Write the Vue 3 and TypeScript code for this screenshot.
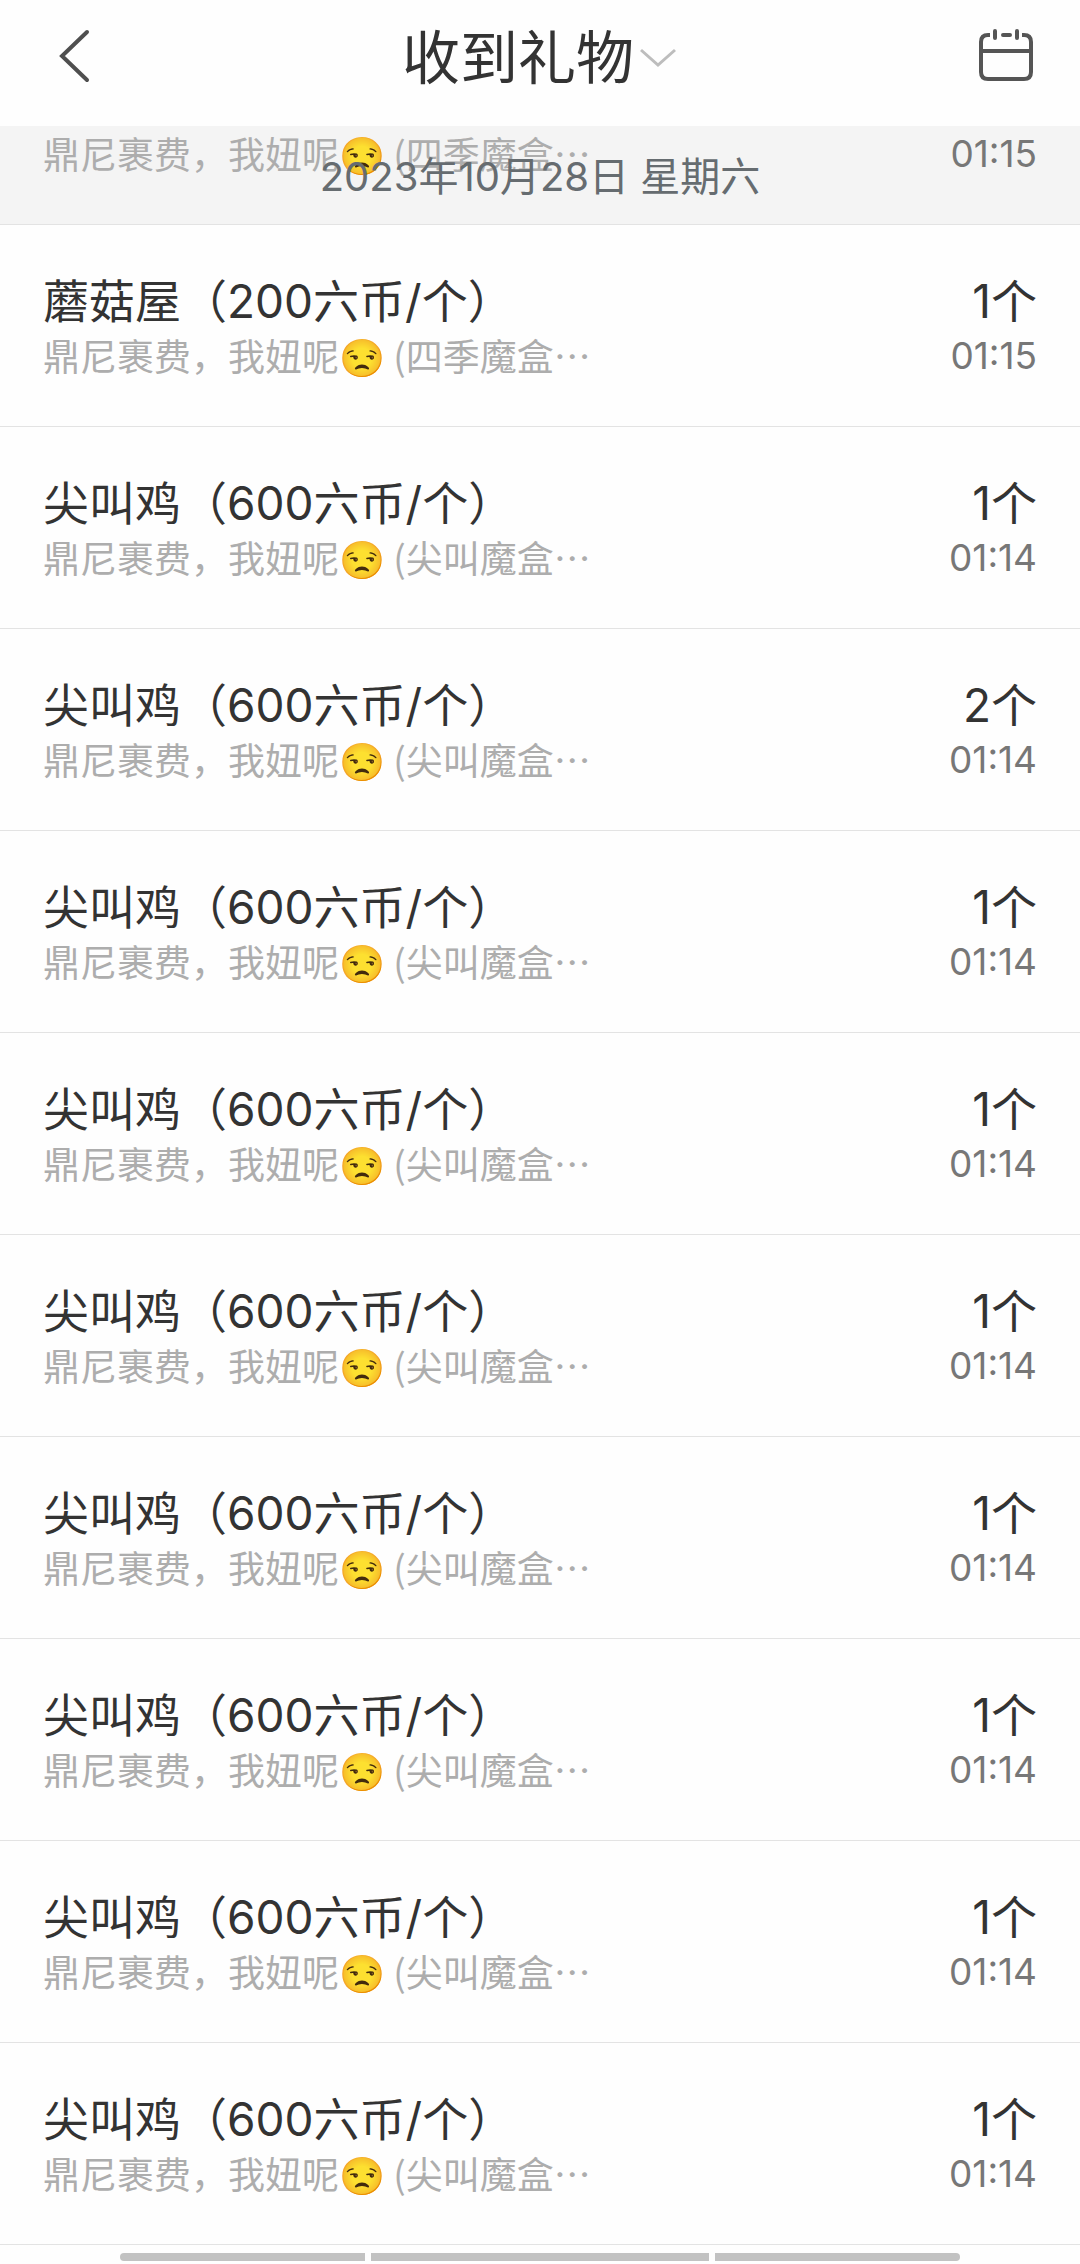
<script setup lang="ts">
interface Gift {
  id: number
  name: string
  price: number
  count: number
  box: string
  time: string
}

const sender = '鼎尼裹费，我妞呢😒'

const previous = { box: '四季魔盒', time: '01:15' }

const counts: number[] = [1, 2, 1, 1, 1, 1, 1, 1, 1]

const gifts: Gift[] = [
  { id: 0, name: '蘑菇屋', price: 200, count: 1, box: '四季魔盒', time: '01:15' },
  ...counts.map((count, i) => ({
    id: i + 1,
    name: '尖叫鸡',
    price: 600,
    count,
    box: '尖叫魔盒',
    time: '01:14',
  })),
]
</script>

<template>
  <div class="page" lang="zh-CN">
    <header class="bar">
      <button class="icon-btn" type="button" aria-label="返回">
        <svg width="56" height="56" viewBox="0 0 56 56" fill="none" stroke="#4f4f4f" stroke-width="4" stroke-linecap="round">
          <path d="M43 5 L18 29 L43 53" />
        </svg>
      </button>
      <h1 class="heading">
        <button class="heading-btn" type="button">
          <span>收到礼物</span>
          <svg width="36" height="20" viewBox="0 0 36 20" fill="none" stroke="#bdbdbd" stroke-width="3">
            <path d="M1 2 L18 17 L35 2" />
          </svg>
        </button>
      </h1>
      <button class="icon-btn" type="button" aria-label="选择日期">
        <svg width="56" height="56" viewBox="0 0 56 56" fill="none" stroke="#555" stroke-width="4" stroke-linecap="butt">
          <path d="M12 8 H10 Q3 8 3 15 V45 Q3 52 10 52 H46 Q53 52 53 45 V15 Q53 8 46 8 H44" />
          <path d="M3 24 H53" />
          <path d="M17 4 V11 M39 4 V11 M25 8 H32" stroke-linecap="round" />
        </svg>
      </button>
    </header>

    <main>
      <section class="day">
        <div class="line">
          <span class="sub">{{ sender }} ({{ previous.box }}…</span>
          <time class="time">{{ previous.time }}</time>
        </div>
        <h2 class="date">2023年10月28日 星期六</h2>
      </section>

      <ul class="list">
        <li v-for="gift in gifts" :key="gift.id" class="row">
          <div class="line">
            <span class="name">{{ gift.name }}（{{ gift.price }}六币/个）</span>
            <span class="name">{{ gift.count }}个</span>
          </div>
          <div class="line">
            <span class="sub">{{ sender }} ({{ gift.box }}…</span>
            <time class="time">{{ gift.time }}</time>
          </div>
        </li>
      </ul>
    </main>

    <footer class="gesture" aria-hidden="true">
      <span class="side"></span>
      <span class="middle"></span>
      <span class="side"></span>
    </footer>
  </div>
</template>

<style>
body {
  margin: 0;
  background: #fefefe;
}
</style>

<style scoped>
.page {
  font-family: Inter, "Noto Sans CJK SC", sans-serif;
  color: #333;
  background: #fefefe;
}

.bar {
  display: flex;
  align-items: center;
  justify-content: space-between;
  height: 126px;
  padding: 0 46px 0 44px;
  box-sizing: border-box;
}

button {
  margin: 0;
  padding: 0;
  border: 0;
  background: none;
  color: inherit;
  font: inherit;
}

.icon-btn {
  display: flex;
  padding-bottom: 16px;
}

.heading {
  margin: 0;
  font-size: 58px;
  line-height: 80px;
  font-weight: 400;
}

.heading-btn {
  display: flex;
  align-items: center;
  gap: 6px;
  padding-bottom: 10px;
}

.day {
  position: relative;
  padding: 1px 43px 43px;
  background: #f4f4f4;
  border-bottom: 1px solid #e3e3e3;
}

.date {
  position: absolute;
  inset: 24px 0 auto;
  margin: 0;
  font-size: 40px;
  line-height: 54px;
  font-weight: 400;
  text-align: center;
  color: #666c70;
}

.list {
  margin: 0;
  padding: 0;
  list-style: none;
}

.row {
  padding: 50px 43px 43px;
  border-bottom: 1px solid #e3e3e3;
}

.line {
  display: flex;
  justify-content: space-between;
  height: 54px;
  line-height: 54px;
  white-space: nowrap;
}

.name {
  font-size: 46px;
  line-height: 52px;
}

.sub {
  font-family: "Noto Sans CJK SC", sans-serif;
  font-size: 37px;
  line-height: 52px;
  color: #adadad;
}

.time {
  font-size: 37px;
  color: #777;
}

.gesture {
  display: flex;
  gap: 6px;
  padding: 8px 120px 3px;
}

.gesture span {
  height: 8px;
  background: #c2c2c2;
}

.side {
  flex: 245;
}

.middle {
  flex: 338;
}

.side:first-child {
  border-radius: 4px 0 0 4px;
}

.side:last-child {
  border-radius: 0 4px 4px 0;
}
</style>
